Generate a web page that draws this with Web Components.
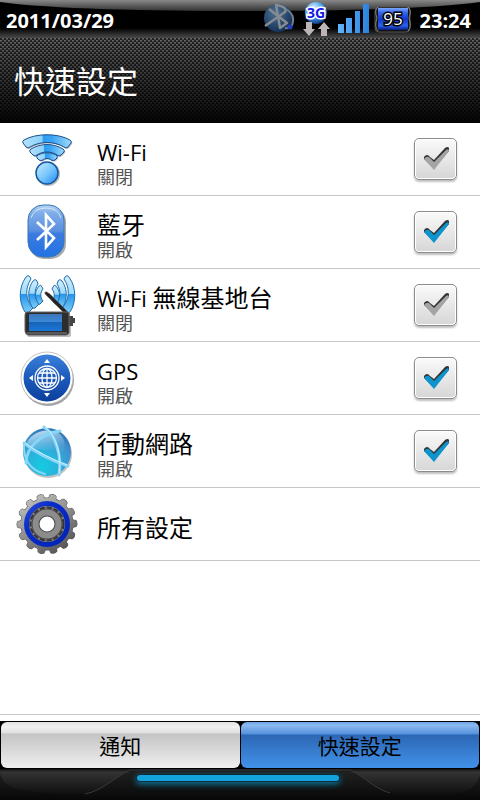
<!DOCTYPE html>
<html lang="zh-Hant">
<head>
<meta charset="utf-8">
<meta name="viewport" content="width=device-width, initial-scale=1">
<title>快速設定</title>
<style>
  body {
    margin: 0;
    font-family: "Open Sans", "Noto Sans", "Noto Sans CJK TC", sans-serif;
  }
</style>
</head>
<body>
<quick-panel>
  <status-bar slot="status" date="2011/03/29" time="23:24" battery="95"></status-bar>
  <panel-header slot="header">快速設定</panel-header>

  <setting-row label="Wi-Fi" state="關閉" toggle>
    <svg slot="icon" viewBox="0 0 64 64" width="64" height="64">
      <defs>
        <linearGradient id="wf" x1="0" y1="0" x2="1" y2="0">
          <stop offset="0" stop-color="#b4e2fc"/><stop offset=".4" stop-color="#8cd0fa"/>
          <stop offset=".42" stop-color="#2a9cf4"/><stop offset=".6" stop-color="#3aa4f4"/><stop offset="1" stop-color="#a0dafc"/>
        </linearGradient>
        <linearGradient id="wd" x1="0" y1="0" x2="1" y2="1">
          <stop offset="0" stop-color="#c8eafe"/><stop offset=".5" stop-color="#7cc8fc"/><stop offset="1" stop-color="#1c86f2"/>
        </linearGradient>
        <g id="arcs">
          <path d="M7 16Q6 14 8 13C20 6 42 6 54 13Q56 14 55 16L52 20Q50 22 48 20C38 14 24 14 14 20Q12 22 10 20Z"/>
          <path d="M14 25Q13 23 15 22C25 16 37 16 47 22Q49 23 48 25L45 28Q43 30 41 28C35 24 27 24 21 28Q19 30 17 28Z"/>
          <path d="M21 31Q20 29 22 28C28 25 34 25 40 28Q42 29 41 31L39 33Q37 34 35 33C33 31 29 31 27 33Q25 34 23 33Z"/>
        </g>
      </defs>
      <g transform="translate(1 1)" fill="#777" opacity=".5">
        <use href="#arcs"/><circle cx="31" cy="46" r="12"/>
      </g>
      <use href="#arcs" fill="url(#wf)" stroke="#1a4f8c" stroke-width="1" stroke-linejoin="round"/>
      <circle cx="31" cy="46" r="11" fill="url(#wd)" stroke="#1558a0" stroke-width="1.5"/>
    </svg>
  </setting-row>

  <setting-row label="藍牙" state="開啟" toggle checked>
    <svg slot="icon" viewBox="0 0 64 64" width="64" height="64">
      <defs>
        <linearGradient id="bt" x1="0" y1="0" x2="0" y2="1">
          <stop offset="0" stop-color="#b8d4f4"/><stop offset=".15" stop-color="#80aee8"/>
          <stop offset=".5" stop-color="#5a8fe0"/><stop offset=".55" stop-color="#3c7be0"/><stop offset="1" stop-color="#2272e4"/>
        </linearGradient>
      </defs>
      <rect x="13" y="7" width="37" height="52" rx="15" fill="#555" opacity=".5"/>
      <rect x="12" y="5" width="36" height="52" rx="15" fill="url(#bt)" stroke="#3478b4"/>
      <path d="M15 18Q18 8 30 8T45 18" fill="none" stroke="#e0effc" stroke-width="1" opacity=".8"/>
      <path d="M21 22L38 38L30 47V15L38 24L21 40" fill="none" stroke="#fff" stroke-width="2.6"/>
    </svg>
  </setting-row>

  <setting-row label="Wi-Fi 無線基地台" state="關閉" toggle>
    <svg slot="icon" viewBox="0 0 64 64" width="64" height="64">
      <defs>
        <linearGradient id="hs" x1="0" y1="0" x2="0" y2="1">
          <stop offset="0" stop-color="#3c76b8"/><stop offset=".45" stop-color="#3c88d8"/>
          <stop offset=".5" stop-color="#1765b8"/><stop offset="1" stop-color="#1a76d8"/>
        </linearGradient>
        <linearGradient id="hw" x1="0" y1="0" x2="0" y2="1">
          <stop offset="0" stop-color="#d0effd"/><stop offset=".48" stop-color="#a0dafa"/>
          <stop offset=".5" stop-color="#2495ec"/><stop offset="1" stop-color="#80cdf8"/>
        </linearGradient>
        <g id="waves" stroke-linejoin="round" stroke="#226fae" stroke-width="1" fill="url(#hw)">
          <path d="M10 4Q12 1 14 4L15 6C9 15 9 26 17 35L13 39Q11 41 9 39C3 30 2 15 10 4Z"/>
          <path d="M17 8Q19 5 21 8L22 11C18 17 18 25 23 31L19 35Q17 36 16 34C11 25 12 15 17 8Z"/>
          <path d="M23 13Q25 11 26 14L27 16C24 20 24 24 27 28L24 31Q23 32 22 30C18 23 19 18 23 13Z"/>
        </g>
      </defs>
      <use href="#waves"/>
      <use href="#waves" transform="matrix(-1 0 0 1 63 0)"/>
      <path d="M29 21Q28 18 31 19L34 21L54 41L51 43Z" fill="#252525" stroke="#777" stroke-width=".5"/>
      <path d="M52 43H57V45H59V50H57V53H51Z" fill="#444"/>
      <rect x="11" y="42" width="44" height="22" rx="2" fill="#555" opacity=".4"/>
      <path d="M11 39H51Q53 39 53 42V60Q52 62 50 62H12Q9 61 9 58V42Q9 39 11 39Z" fill="#2d2d2d" stroke="#666"/>
      <rect x="13" y="41" width="33" height="17" fill="url(#hs)"/>
      <path d="M11 60H51" stroke="#888" fill="none"/>
    </svg>
  </setting-row>

  <setting-row label="GPS" state="開啟" toggle checked>
    <svg slot="icon" viewBox="0 0 64 64" width="64" height="64">
      <defs>
        <linearGradient id="gp" x1="0" y1="0" x2="0" y2="1">
          <stop offset="0" stop-color="#3b80da"/><stop offset=".5" stop-color="#1c5abc"/><stop offset="1" stop-color="#0b3f9c"/>
        </linearGradient>
      </defs>
      <circle cx="32" cy="34" r="26" fill="#555" opacity=".55"/>
      <circle cx="31" cy="32" r="26" fill="#fff" stroke="#aaa" stroke-width=".7"/>
      <circle cx="31" cy="32" r="23.500" fill="url(#gp)"/>
      <g fill="none" stroke="#fff" stroke-width="1.3">
        <circle cx="31" cy="32" r="12"/>
        <circle cx="31" cy="32" r="9.500"/>
        <ellipse cx="31" cy="32" rx="5" ry="9.500"/>
        <path d="M31 22V42M21 32H41M23 27H39M23 37H39"/>
      </g>
      <path d="M31 13L34 17H28ZM31 51L34 47H28ZM13 32L17 29V35ZM49 32L45 29V35Z" fill="#fff"/>
    </svg>
  </setting-row>

  <setting-row label="行動網路" state="開啟" toggle checked>
    <svg slot="icon" viewBox="0 0 64 64" width="64" height="64">
      <defs>
        <radialGradient id="gl" cx=".4" cy=".8" r=".85">
          <stop offset="0" stop-color="#14cce0"/><stop offset=".4" stop-color="#2cb0dc"/>
          <stop offset=".75" stop-color="#3f90cc"/><stop offset="1" stop-color="#2a6cae"/>
        </radialGradient>
        <linearGradient id="gs" x1="0" y1="0" x2=".4" y2="1">
          <stop offset="0" stop-color="#f0faff" stop-opacity=".9"/><stop offset="1" stop-color="#9ad0f0" stop-opacity=".1"/>
        </linearGradient>
      </defs>
      <circle cx="32" cy="35" r="24" fill="#666" opacity=".4"/>
      <circle cx="31" cy="33" r="24" fill="url(#gl)"/>
      <path d="M10 26C14 13 32 7 44 15C49 20 50 27 47 33C36 29 26 35 10 26Z" fill="url(#gs)"/>
      <g fill="none" stroke="#86d6f8" stroke-width="3" stroke-linecap="round">
        <path d="M8 24C20 34 37 42 52 47"/>
        <path d="M10 44C10 28 26 14 44 12"/>
        <path d="M28 8C40 16 46 38 43 56"/>
        <path d="M8 24C7 40 14 51 29 55" stroke-width="2"/>
      </g>
      <path d="M9 24C21 33 38 41 51 46M29 8C41 17 46 38 43 54" fill="none" stroke="#c8f0ff" stroke-width="1"/>
    </svg>
  </setting-row>

  <setting-row label="所有設定">
    <svg slot="icon" viewBox="0 0 64 64" width="64" height="64">
      <defs>
        <linearGradient id="ge" x1="0" y1="0" x2="1" y2="1">
          <stop offset=".1" stop-color="#c2c6c2"/><stop offset=".5" stop-color="#8a8a8a"/><stop offset=".9" stop-color="#4c4c4c"/>
        </linearGradient>
        <linearGradient id="gb" x1="0" y1="0" x2="1" y2="1">
          <stop offset="0" stop-color="#2a4cd4"/><stop offset=".3" stop-color="#0a2ccc"/><stop offset="1" stop-color="#0024b4"/>
        </linearGradient>
        <!-- one tooth, turned into fourteen -->
        <path id="tooth" d="M27 8L28 3Q31 1 34 3L35 8Z"/>
        <g id="gear">
          <circle cx="31" cy="32" r="26"/>
          <use href="#tooth"/>
          <use href="#tooth" transform="rotate(25.714 31 32)"/>
          <use href="#tooth" transform="rotate(51.429 31 32)"/>
          <use href="#tooth" transform="rotate(77.143 31 32)"/>
          <use href="#tooth" transform="rotate(102.857 31 32)"/>
          <use href="#tooth" transform="rotate(128.571 31 32)"/>
          <use href="#tooth" transform="rotate(154.286 31 32)"/>
          <use href="#tooth" transform="rotate(180 31 32)"/>
          <use href="#tooth" transform="rotate(205.714 31 32)"/>
          <use href="#tooth" transform="rotate(231.429 31 32)"/>
          <use href="#tooth" transform="rotate(257.143 31 32)"/>
          <use href="#tooth" transform="rotate(282.857 31 32)"/>
          <use href="#tooth" transform="rotate(308.571 31 32)"/>
          <use href="#tooth" transform="rotate(334.286 31 32)"/>
        </g>
        <mask id="teeth"><use href="#gear" fill="#fff"/></mask>
      </defs>
      <g transform="rotate(12 31 32)">
        <use href="#gear" fill="#444" stroke="#555" stroke-width="1"/>
        <rect width="64" height="64" fill="url(#ge)" mask="url(#teeth)"/>
      </g>
      <circle cx="31" cy="32" r="20.500" fill="#7c7c7c" stroke="url(#gb)" stroke-width="5"/>
      <circle cx="31" cy="32" r="16.500" fill="none" stroke="#333" stroke-width="2" stroke-dasharray="5 2"/>
      <circle cx="31" cy="32" r="11.500" fill="#fff" stroke="#4a4a4a" stroke-width="8"/>
      <circle cx="31" cy="32" r="11.500" fill="none" stroke="#8c8c8c" stroke-width="6"/>
    </svg>
  </setting-row>

  <tab-bar slot="tabs">
    <tab-button>通知</tab-button>
    <tab-button active>快速設定</tab-button>
  </tab-bar>
  <drawer-handle slot="tabs"></drawer-handle>
</quick-panel>

<script>
const define = (name, html, setup) => {
  const template = document.createElement('template');
  template.innerHTML = html;

  customElements.define(name, class extends HTMLElement {
    constructor() {
      super();

      this.attachShadow({ mode: 'open' });

      this.shadowRoot.appendChild(template.content.cloneNode(true));
    }

    connectedCallback() {
      setup?.(this, this.shadowRoot);
    }
  });
};

define('quick-panel', `
  <style>
    :host {
      display: flex;
      flex-direction: column;
      min-height: 100vh;
      background: #fff;
    }
    main {
      flex: 1;
      border-bottom: 1px solid #c6c6c6;
      margin-bottom: 6px;
    }
  </style>
  <slot name="status"></slot>
  <slot name="header"></slot>
  <main><slot></slot></main>
  <slot name="tabs"></slot>
`);

define('status-bar', `
  <style>
    :host {
      display: flex;
      align-items: center;
      position: relative;
      height: 38px;
      padding: 0 9px 0 6px;
      box-sizing: border-box;
      color: #fff;
      font-size: 20px;
      font-weight: 700;
      line-height: 34px;
      background: linear-gradient(#000 28px, #4a4a4a);
    }
    .gloss {
      position: absolute;
      inset: 0;
      width: 100%;
      height: 100%;
    }
    time, .icons {
      position: relative;
    }
    time {
      padding-top: 4px;
    }
    .icons {
      margin-left: auto;
      margin-right: 9px;
    }
    svg {
      display: block;
    }
  </style>
  <svg class="gloss" viewBox="0 0 480 38" preserveAspectRatio="none" aria-hidden="true">
    <defs>
      <linearGradient id="g" x1="0" y1="0" x2="0" y2="1">
        <stop offset="0" stop-color="#888"/><stop offset="1" stop-color="#333"/>
      </linearGradient>
    </defs>
    <path d="M0 0H480V2C430 9 330 11 240 11S50 9 0 2Z" fill="url(#g)"/>
  </svg>
  <time class="date"></time>
  <div class="icons">
    <svg width="150" height="38" viewBox="0 0 150 38">
      <defs>
        <radialGradient id="b" cx=".4" cy=".3" r=".7">
          <stop offset="0" stop-color="#4a6f92"/><stop offset="1" stop-color="#16325a"/>
        </radialGradient>
        <radialGradient id="e" cx=".4" cy=".3" r=".7">
          <stop offset="0" stop-color="#f2f8ff"/><stop offset=".6" stop-color="#3f9be8"/><stop offset="1" stop-color="#123c80"/>
        </radialGradient>
        <linearGradient id="s" x1="0" x2="1" y1="0" y2="0">
          <stop offset="0" stop-color="#62b4ff"/><stop offset="1" stop-color="#2b83e0"/>
        </linearGradient>
        <linearGradient id="c" x1="0" x2="0" y1="0" y2="1">
          <stop offset="0" stop-color="#7ba8ff"/><stop offset=".2" stop-color="#3868e8"/>
          <stop offset=".5" stop-color="#1238c8"/><stop offset=".8" stop-color="#2d62ee"/><stop offset="1" stop-color="#071c7c"/>
        </linearGradient>
      </defs>
      <circle cx="17" cy="18" r="14" fill="url(#b)"/>
      <path d="M4 26L24 12Q27 7 15 5L19 28L26 23L8 9" fill="none" stroke="#858b91" stroke-width="2.500" stroke-linejoin="round"/>
      <path d="M25 9Q35 15 31 25Q29 29 24 28" fill="none" stroke="#6d7c90" stroke-width="2"/>
      <circle cx="29" cy="27" r="2.500" fill="#2440c0"/>
      <circle cx="55" cy="13" r="11" fill="url(#e)"/>
      <path d="M45 22H51V29H54L48 36L42 29H45ZM60 36V29H57L63 22L69 29H66V36Z" fill="#bdb5b5"/>
      <text x="55" y="18" text-anchor="middle" font-size="14" stroke="#fff" stroke-width="3" paint-order="stroke" fill="#1018e8">3G</text>
      <path d="M77 24H83V33H77ZM85 18H91V33H85ZM94 11H99V33H94ZM102 4H108V33H102Z" fill="url(#s)"/>
      <rect x="114" y="7" width="35" height="25" rx="4" fill="#111" stroke="#555"/>
      <rect x="117" y="8" width="30" height="22" fill="url(#c)"/>
      <path d="M117 7Q113 10 116 18Q113 27 117 31M147 7Q151 10 148 18Q151 27 147 31" fill="none" stroke="#888" stroke-width="1"/>
      <text class="battery" x="132" y="25" text-anchor="middle" font-size="17" font-weight="400" stroke="#000" stroke-width="3" paint-order="stroke" fill="#fff"></text>
    </svg>
  </div>
  <time class="clock"></time>
`, (el, root) => {
  root.querySelector('.date').textContent = el.getAttribute('date');
  root.querySelector('.clock').textContent = el.getAttribute('time');
  root.querySelector('.battery').textContent = el.getAttribute('battery');
});

define('panel-header', `
  <style>
    :host {
      display: block;
      padding: 21px 14px 20px;
      background:
        linear-gradient(rgba(0, 0, 0, 0), rgba(0, 0, 0, .95)),
        repeating-linear-gradient(rgba(0, 0, 0, 0) 0 1px, rgba(0, 0, 0, .25) 1px 2px),
        repeating-conic-gradient(#666 0 25%, #262626 0 50%) 0 0 / 4px 4px;
    }
    h1 {
      margin: 0;
      color: #fff;
      font-size: 31px;
      font-weight: 400;
      line-height: 44px;
    }
  </style>
  <h1><slot></slot></h1>
`);

define('setting-row', `
  <style>
    :host {
      display: block;
      border-bottom: 1px solid #c6c6c6;
    }
    label {
      display: flex;
      align-items: center;
      height: 72px;
      padding: 0 23px 0 16px;
    }
    .text {
      flex: 1;
      margin-left: 17px;
      padding-top: 9px;
      font-family: Roboto, "Noto Sans CJK TC", sans-serif;
    }
    .name, .state {
      display: block;
    }
    .name {
      color: #000;
      font-size: 24px;
      line-height: 28px;
    }
    /* latin letters run a little smaller than the han beside them */
    .latin {
      font-family: "Open Sans", sans-serif;
      font-size: 22px;
      line-height: 1;
    }
    .state {
      color: #555;
      font-size: 18px;
      line-height: 22px;
    }
    .box {
      display: grid;
      position: relative;
    }
    input {
      appearance: none;
      width: 43px;
      height: 42px;
      margin: 0;
      border: 1px solid #8c8c8c;
      border-radius: 5px;
      background: linear-gradient(#fafafa, #d6d6d6);
      box-shadow: 0 2px 2px rgba(0, 0, 0, .25), inset 0 0 0 1px #fff;
    }
    .tick {
      position: absolute;
      inset: 0;
      pointer-events: none;
      --tick: #a4a4a4;
    }
    input:checked + .tick {
      --tick: #0d94cc;
    }
  </style>
  <label>
    <slot name="icon"></slot>
    <span class="text">
      <span class="name"></span>
      <span class="state"></span>
    </span>
    <span class="box">
      <input type="checkbox">
      <svg class="tick" width="43" height="42" viewBox="0 0 43 42">
        <path d="M10 19Q13 15 16 19L20 22L31 10Q34 8 35 10V13L20 30L10 21Z" fill="#333"/>
        <path d="M10 21Q13 17 16 20L20 24L32 12Q35 10 35 13L20 32Z" fill="var(--tick)"/>
      </svg>
    </span>
  </label>
`, (el, root) => {
  const name = root.querySelector('.name');

  name.replaceChildren(...el.getAttribute('label').split(/([\w-]+ ?)/).filter(Boolean).map((part) => {
    if (!/^\w/.test(part)) {
      return part;
    }

    const span = document.createElement('span');
    span.className = 'latin';
    span.textContent = part;

    return span;
  }));

  if (el.hasAttribute('state')) {
    root.querySelector('.state').textContent = el.getAttribute('state');
  } else {
    root.querySelector('.state').remove();
  }

  if (el.hasAttribute('toggle')) {
    root.querySelector('input').checked = el.hasAttribute('checked');
  } else {
    root.querySelector('.box').remove();
  }
});

define('tab-bar', `
  <style>
    :host {
      display: grid;
      grid-auto-flow: column;
      grid-auto-columns: 1fr;
      gap: 1px;
      padding: 1px;
      background: #000;
    }
  </style>
  <slot></slot>
`);

define('tab-button', `
  <style>
    :host {
      display: grid;
    }
    button {
      height: 46px;
      padding: 0;
      border: 0;
      border-radius: 6px;
      color: #000;
      font: inherit;
      font-size: 21px;
      background: linear-gradient(#e2e2e2, #f2f2f2 5px, #dedede 11px, #c4c4c4 12px, #f0f0f0);
    }
    :host([active]) button {
      background: linear-gradient(#6ca4e4, #8cbaf0 3px, #5492dc 12px, #2c67b4 13px, #4292ea);
    }
  </style>
  <button type="button"><slot></slot></button>
`);

define('drawer-handle', `
  <style>
    :host {
      display: grid;
      justify-items: center;
      position: relative;
      height: 31px;
      background: linear-gradient(#111, #333 3px, #1e1e1e 16px, #050505);
    }
    svg {
      position: absolute;
      inset: 0;
      width: 100%;
      height: 100%;
    }
    .light {
      position: relative;
      width: 42%;
      height: 6px;
      margin-top: 6px;
      margin-right: 4px;
      border-radius: 3px;
      background: #14a2dc;
      box-shadow: 0 0 0 1px #102a38, 0 2px 6px 1px #087ca8;
    }
  </style>
  <svg viewBox="0 0 480 31" preserveAspectRatio="none" aria-hidden="true">
    <path d="M0 4Q2 16 18 20Q40 26 85 25C102 22 116 7 130 1H350C367 9 373 19 390 24Q392 26 400 26H450Q475 24 480 6V31H0Z" fill="#080a09" opacity=".45"/>
    <path d="M85 25C102 22 116 7 130 1H350C367 9 373 19 390 24" fill="none" stroke="#3a3a3a"/>
  </svg>
  <div class="light"></div>
`);
</script>
</body>
</html>
